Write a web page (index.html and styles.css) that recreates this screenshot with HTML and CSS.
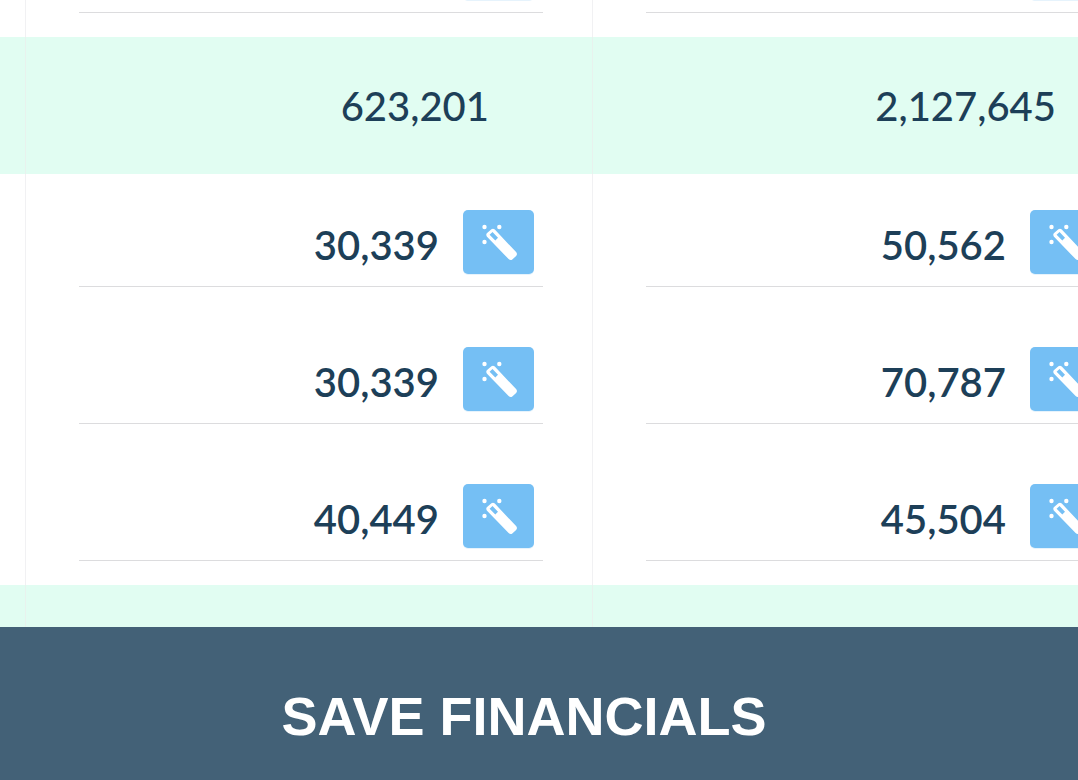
FILE: index.html
```html
<!DOCTYPE html>
<html lang="en">
  <head>
    <meta charset="UTF-8" />
    <meta name="viewport" content="width=device-width, initial-scale=1.0" />
    <title>Financials</title>
    <link rel="stylesheet" href="styles.css">
  </head>
  <body>
    <svg class="sprite" aria-hidden="true">
      <symbol id="wand" viewBox="0 0 36 38">
        <circle cx="3.500" cy="4" r="2.200" />
        <circle cx="18.300" cy="4" r="2.200" />
        <circle cx="3.500" cy="19" r="2.200" />
        <path fill-rule="evenodd" d="M5.800 13.400Q4.600 11.400 6.100 10L10.400 6.200Q12.200 5 13.800 6.600L35.300 29.300Q36.700 31.300 35.100 33L31.300 36.500Q29.500 37.700 27.600 36.100ZM8.600 11.800L14.300 17.600L17 14.800L11.500 9Z" />
      </symbol>
    </svg>
    <main class="sheet">
      <table class="financials">
        <colgroup>
          <col class="col-label">
          <col class="col-year">
          <col class="col-year">
        </colgroup>
        <tbody>
          <tr>
            <td></td>
            <td><div class="field"><input type="text" aria-label="Amount, year 1"><button type="button" aria-label="Fill"><svg><use href="#wand" /></svg></button></div></td>
            <td><div class="field"><input type="text" aria-label="Amount, year 2"><button type="button" aria-label="Fill"><svg><use href="#wand" /></svg></button></div></td>
          </tr>
          <tr class="total">
            <td></td>
            <td>623,201</td>
            <td>2,127,645</td>
          </tr>
          <tr>
            <td></td>
            <td><div class="field"><input type="text" value="30,339" aria-label="Amount, year 1"><button type="button" aria-label="Fill"><svg><use href="#wand" /></svg></button></div></td>
            <td><div class="field"><input type="text" value="50,562" aria-label="Amount, year 2"><button type="button" aria-label="Fill"><svg><use href="#wand" /></svg></button></div></td>
          </tr>
          <tr>
            <td></td>
            <td><div class="field"><input type="text" value="30,339" aria-label="Amount, year 1"><button type="button" aria-label="Fill"><svg><use href="#wand" /></svg></button></div></td>
            <td><div class="field"><input type="text" value="70,787" aria-label="Amount, year 2"><button type="button" aria-label="Fill"><svg><use href="#wand" /></svg></button></div></td>
          </tr>
          <tr>
            <td></td>
            <td><div class="field"><input type="text" value="40,449" aria-label="Amount, year 1"><button type="button" aria-label="Fill"><svg><use href="#wand" /></svg></button></div></td>
            <td><div class="field"><input type="text" value="45,504" aria-label="Amount, year 2"><button type="button" aria-label="Fill"><svg><use href="#wand" /></svg></button></div></td>
          </tr>
          <tr class="total">
            <td></td>
            <td></td>
            <td></td>
          </tr>
        </tbody>
      </table>
    </main>
    <button type="submit" class="save">SAVE FINANCIALS</button>
  </body>
</html>
```

FILE: styles.css
```css
* {
  box-sizing: border-box;
}
body {
  margin: 0;
  height: 100vh;
  display: flex;
  flex-direction: column;
  overflow: hidden;
  background-color: #fff;
  color: #1d3f58;
  font-family: Lato, sans-serif;
  font-size: 40px;
}
.sprite {
  display: none;
}
.sheet {
  flex: 1;
  min-height: 0;
  overflow: hidden;
}
/* first row is scrolled most of the way out */
.financials {
  width: 1160px;
  margin-top: -100px;
  table-layout: fixed;
  border-collapse: separate;
  border-spacing: 0;
}
.col-label {
  width: 26px;
}
.col-year {
  width: 567px;
}
.financials tr {
  height: 137px;
}
.financials td {
  padding: 0 49px 0 53px;
  border-right: 1px solid #f1f1f3;
  vertical-align: middle;
}
.financials td:first-child {
  padding: 0;
}
.financials .total td {
  padding-right: 103px;
  background-color: #e1fdf2;
  border-right-color: #e8f2ee;
  font-weight: 500;
  text-align: right;
}
.field {
  display: flex;
  align-items: center;
  gap: 24px;
  height: 88px;
  padding-right: 9px;
  border-bottom: 1px solid #dcdcde;
}
.field input {
  flex: 1;
  min-width: 0;
  height: 64px;
  padding: 6px 0 0;
  border: 0;
  outline: 0;
  background: none;
  color: inherit;
  font: inherit;
  font-weight: 600;
  text-align: right;
}
.field button {
  width: 71px;
  height: 64px;
  padding: 0;
  display: flex;
  align-items: center;
  justify-content: center;
  border: 0;
  border-radius: 5px;
  background-color: #75bff4;
  box-shadow: 0 1px #e6f3fc;
  color: #fff;
}
.field svg {
  width: 36px;
  height: 38px;
  fill: currentColor;
}
.save {
  flex: none;
  height: 153px;
  padding: 24px 30px 0 0;
  border: 0;
  background-color: #436177;
  color: #fff;
  font: bold 54px "Liberation Sans", Arial, sans-serif;
}
```
